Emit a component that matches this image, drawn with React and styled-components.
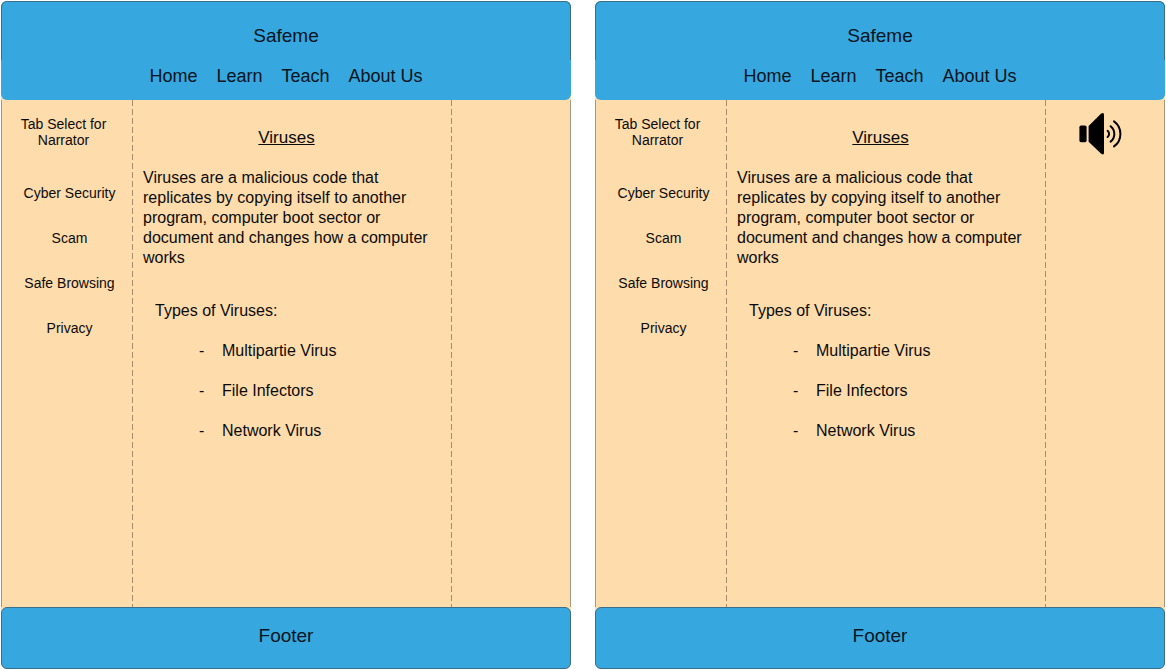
import React from 'react';
import styled, { createGlobalStyle } from 'styled-components';

const GlobalStyle = createGlobalStyle`
  *, *::before, *::after { box-sizing: border-box; }
  body {
    margin: 0;
    background: #ffffff;
    color: #0b0b0b;
    font-family: "Liberation Sans", Arial, sans-serif;
  }
`;

const blue = '#37a7df';
const sand = '#fedcac';
const outline = '#3a6f8c';
const headerInk = '#04141c';

const Page = styled.div`
  display: grid;
  grid-template-columns: 1fr 1fr;
  gap: 24px;
  min-height: 100vh;
  padding: 1px;
`;

const Panel = styled.section`
  display: flex;
  flex-direction: column;
  border-radius: 6px;
  background: ${sand};
`;

const Header = styled.header`
  border-radius: 6px;
  background: ${blue};
`;

const Brand = styled.h1`
  margin: 0;
  height: 59px;
  padding-top: 22px;
  border: 1px solid ${outline};
  border-bottom: 0;
  border-radius: 6px 6px 0 0;
  font-size: 19px;
  font-weight: 400;
  line-height: 24px;
  text-align: center;
  color: ${headerInk};
`;

const Nav = styled.nav`
  display: flex;
  justify-content: center;
  gap: 19px;
  height: 40px;
  padding-top: 4px;
`;

const NavLink = styled.a`
  font-size: 18px;
  line-height: 24px;
  color: ${headerInk};
  text-decoration: none;
`;

const Columns = styled.div`
  flex: 1;
  display: grid;
  grid-template-columns: 131fr 319fr 118fr;
  border: solid #a8977f;
  border-width: 0 1px;
`;

const Column = styled.div`
  background: ${(p) =>
    p.$divided
      ? 'repeating-linear-gradient(to bottom, #a58c6b 0 6px, transparent 6px 9px) right top / 1px 100% no-repeat'
      : 'none'};
`;

const Sidebar = styled(Column)`
  display: flex;
  flex-direction: column;
  align-items: center;
  padding: 16px 0 28px 4px;
`;

const NarratorButton = styled.button`
  width: 100px;
  margin: 0 12px 37px 0;
  padding: 0;
  border: 0;
  background: none;
  color: inherit;
  font: inherit;
  font-size: 14px;
  line-height: 16px;
  cursor: pointer;
`;

const Topics = styled.nav`
  display: flex;
  flex-direction: column;
  align-items: center;
  gap: 29px;
`;

const TopicLink = styled.a`
  font-size: 14px;
  line-height: 16px;
  color: inherit;
  text-decoration: none;
`;

const Article = styled(Column)`
  padding: 28px 2px 28px 10px;
  font-size: 16px;
  line-height: 20px;
`;

const Title = styled.h2`
  margin: 0 0 20px;
  padding-right: 20px;
  font-size: 17px;
  font-weight: 400;
  text-align: center;
  text-decoration: underline;
`;

const Paragraph = styled.p`
  margin: 0 0 33px;
  padding-right: 12px;
`;

const ListTitle = styled.h3`
  margin: 0 0 20px;
  padding-left: 12px;
  font-size: 16px;
  font-weight: 400;
`;

const List = styled.ul`
  display: flex;
  flex-direction: column;
  gap: 20px;
  margin: 0;
  padding: 0 0 0 56px;
  list-style: none;
`;

const Item = styled.li`
  display: grid;
  grid-template-columns: 23px 1fr;
`;

const Tools = styled(Column)`
  display: flex;
  flex-direction: column;
  align-items: center;
  padding: 12px 18px 12px 8px;
`;

const SoundButton = styled.button`
  padding: 0;
  border: 0;
  background: none;
  color: #000000;
  cursor: pointer;
  line-height: 0;
`;

const Footer = styled.footer`
  height: 62px;
  padding-top: 16px;
  border: 1px solid ${outline};
  border-radius: 6px;
  background: ${blue};
  color: ${headerInk};
  font-size: 19px;
  line-height: 24px;
  text-align: center;
`;

function SpeakerIcon() {
  return (
    <svg width="44" height="44" viewBox="0 0 44 44" aria-hidden="true">
      <rect x="1.4" y="13.6" width="7.2" height="16.6" rx="1.6" fill="currentColor" />
      <path
        d="M10.6 14 L23.2 1.6 Q26 -0.2 26 2.8 V40.6 Q26 43.6 23.2 41.8 L10.6 29.8 Z"
        fill="currentColor"
      />
      <g fill="none" stroke="currentColor" strokeWidth="2" strokeLinecap="round">
        <path d="M29.6 18.8 A4 4 0 0 1 29.6 25" />
        <path d="M32.6 14.2 A9.8 9.8 0 0 1 32.6 29.6" />
        <path d="M36 9.4 A15.4 15.4 0 0 1 36 34.4" />
      </g>
    </svg>
  );
}

const sections = ['Home', 'Learn', 'Teach', 'About Us'];
const topics = ['Cyber Security', 'Scam', 'Safe Browsing', 'Privacy'];
const virusTypes = ['Multipartie Virus', 'File Infectors', 'Network Virus'];

function Screen({ narrated }) {
  return (
    <Panel>
      <Header>
        <Brand>Safeme</Brand>
        <Nav aria-label="Main">
          {sections.map((name) => (
            <NavLink key={name} href="#">{name}</NavLink>
          ))}
        </Nav>
      </Header>
      <Columns>
        <Sidebar $divided>
          <NarratorButton type="button">Tab Select for Narrator</NarratorButton>
          <Topics aria-label="Topics">
            {topics.map((name) => (
              <TopicLink key={name} href="#">{name}</TopicLink>
            ))}
          </Topics>
        </Sidebar>
        <Article as="main" $divided>
          <Title>Viruses</Title>
          <Paragraph>
            Viruses are a malicious code that replicates by copying itself to another
            program, computer boot sector or document and changes how a computer works
          </Paragraph>
          <ListTitle>Types of Viruses:</ListTitle>
          <List>
            {virusTypes.map((name) => (
              <Item key={name}>
                <span>-</span>
                <span>{name}</span>
              </Item>
            ))}
          </List>
        </Article>
        <Tools>
          {narrated && (
            <SoundButton type="button" aria-label="Narrator">
              <SpeakerIcon />
            </SoundButton>
          )}
        </Tools>
      </Columns>
      <Footer>Footer</Footer>
    </Panel>
  );
}

export default function App() {
  return (
    <>
      <GlobalStyle />
      <Page>
        <Screen />
        <Screen narrated />
      </Page>
    </>
  );
}
